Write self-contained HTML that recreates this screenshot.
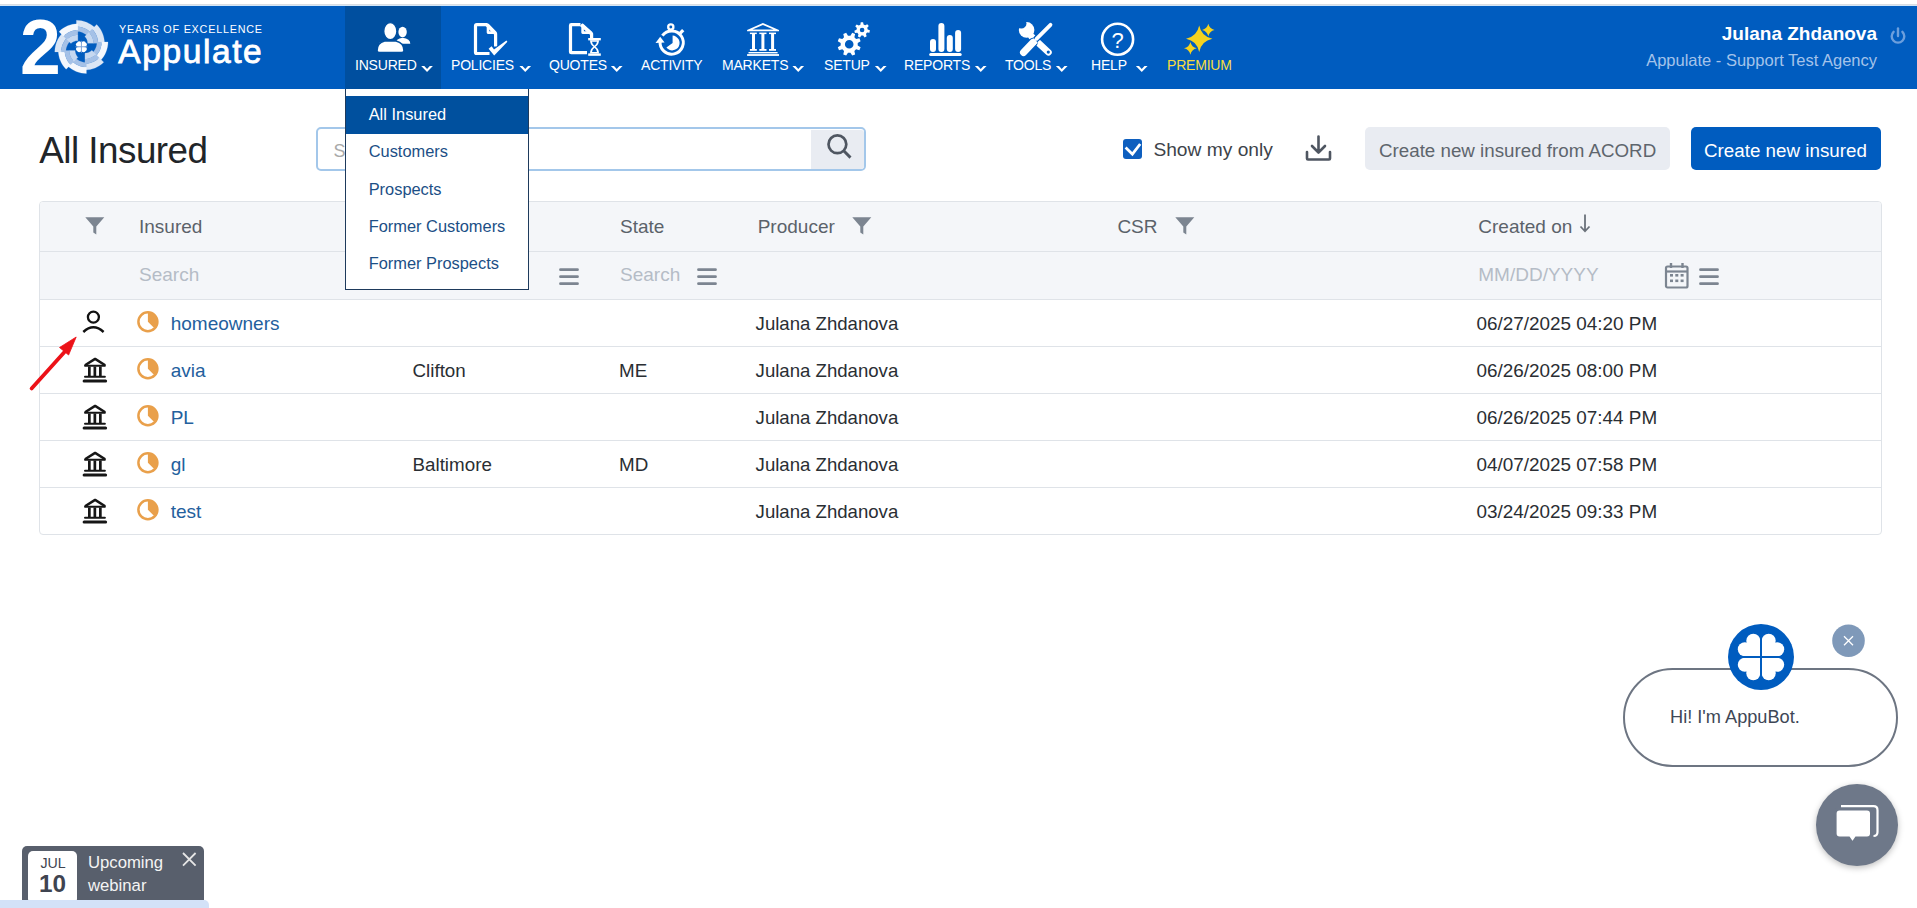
<!DOCTYPE html>
<html><head><meta charset="utf-8"><style>
*{box-sizing:border-box;margin:0;padding:0}
html,body{width:1917px;height:908px;overflow:hidden;background:#fff;font-family:"Liberation Sans",sans-serif;position:relative}
.t{position:absolute;white-space:nowrap}
.r{position:absolute}
svg{position:absolute;overflow:visible}
</style></head>
<body>
<div class="r" style="left:0px;top:0px;width:1917px;height:4px;background:#ffffff;"></div>
<div class="r" style="left:0px;top:4px;width:1917px;height:1px;background:#d9dde2;"></div>
<div class="r" style="left:0px;top:5px;width:1917px;height:1px;background:#d4e6f7;"></div>
<div class="r" style="left:0px;top:6px;width:1917px;height:83px;background:#005cbf;"></div>
<div class="r" style="left:345px;top:6px;width:96px;height:83px;background:#004f9f;"></div>
<svg class="abs" style="left:0;top:0" width="1917" height="90" viewBox="0 0 1917 90">
<g fill="#fff" stroke="none">
<!-- insured -->
<ellipse cx="402.6" cy="32" rx="4.2" ry="5.3"/>
<path d="M395.5,43.8 Q395.5,38.6 402.6,37.8 Q410.3,38.6 410.3,43.8 Z"/>
<path d="M377,50.5 Q377,43 384.5,41 L396,41 Q404,43 404,50.5 Q404,52.5 401.5,52.5 L379.5,52.5 Q377,52.5 377,50.5 Z" stroke="#004f9f" stroke-width="1.6"/>
<ellipse cx="390.3" cy="31.2" rx="6.6" ry="8.6" stroke="#004f9f" stroke-width="1.4"/>
<!-- reports -->
<rect x="930" y="39" width="6" height="13" rx="3"/>
<rect x="938.4" y="23" width="6" height="29" rx="3"/>
<rect x="946.8" y="35" width="6" height="17" rx="3"/>
<rect x="955.1" y="30" width="6" height="22" rx="3"/>
<rect x="929.2" y="53" width="32.5" height="3" rx="1.5"/>
<!-- setup -->
<path fill-rule="evenodd" d="M857.71,45.41 L860.61,47.22 L859.40,50.13 L856.08,49.36 L854.36,51.08 L855.13,54.40 L852.22,55.61 L850.41,52.71 L847.99,52.71 L846.18,55.61 L843.27,54.40 L844.04,51.08 L842.32,49.36 L839.00,50.13 L837.79,47.22 L840.69,45.41 L840.69,42.99 L837.79,41.18 L839.00,38.27 L842.32,39.04 L844.04,37.32 L843.27,34.00 L846.18,32.79 L847.99,35.69 L850.41,35.69 L852.22,32.79 L855.13,34.00 L854.36,37.32 L856.08,39.04 L859.40,38.27 L860.61,41.18 L857.71,42.99 Z M844.90,44.20 a4.30,4.30 0 1,0 8.60,0 a4.30,4.30 0 1,0 -8.60,0 Z"/>
<path fill-rule="evenodd" d="M867.68,29.51 L869.89,30.37 L869.42,32.69 L867.05,32.62 L865.96,34.06 L866.67,36.32 L864.56,37.40 L863.14,35.50 L861.33,35.55 L860.01,37.51 L857.85,36.54 L858.44,34.24 L857.29,32.86 L854.92,33.05 L854.34,30.75 L856.50,29.78 L856.86,28.02 L855.24,26.29 L856.67,24.40 L858.78,25.49 L860.38,24.67 L860.73,22.32 L863.10,22.26 L863.55,24.59 L865.20,25.33 L867.25,24.14 L868.77,25.96 L867.24,27.77 Z M859.80,30.00 a2.30,2.30 0 1,0 4.60,0 a2.30,2.30 0 1,0 -4.60,0 Z"/>
<!-- premium -->
<g fill="#f5d21e"><path d="M1199.20,25.60 Q1201.40,36.60 1212.40,38.80 Q1201.40,41.00 1199.20,52.00 Q1197.00,41.00 1186.00,38.80 Q1197.00,36.60 1199.20,25.60 Z"/><path d="M1208.30,23.80 Q1209.50,28.80 1214.50,30.00 Q1209.50,31.20 1208.30,36.20 Q1207.10,31.20 1202.10,30.00 Q1207.10,28.80 1208.30,23.80 Z"/><path d="M1190.40,41.90 Q1191.60,47.10 1196.80,48.30 Q1191.60,49.50 1190.40,54.70 Q1189.20,49.50 1184.00,48.30 Q1189.20,47.10 1190.40,41.90 Z"/></g>
<!-- markets -->
<path fill-rule="evenodd" d="M747.1,31.2 L747.1,30 L762.9,22.9 L779,30 L779,31.2 Z M752.5,29.4 L762.9,25 L773.5,29.4 Z"/>
<rect x="749.9" y="32.6" width="6.9" height="1.5"/><rect x="752" y="33.5" width="3" height="16"/><rect x="749.9" y="49" width="6.9" height="1.8"/>
<rect x="759.3" y="32.6" width="7.2" height="1.5"/><rect x="761.4" y="33.5" width="3" height="16"/><rect x="759.3" y="49" width="7.2" height="1.8"/>
<rect x="769" y="32.6" width="7" height="1.5"/><rect x="771.1" y="33.5" width="3" height="16"/><rect x="769" y="49" width="7" height="1.8"/>
<rect x="748.5" y="52" width="29.1" height="1.4"/>
<rect x="747.1" y="54.1" width="31.9" height="1.8"/>
</g>
<g fill="none" stroke="#fff" stroke-linecap="butt" stroke-linejoin="round">
<!-- policies doc -->
<path d="M487.5,24.7 L476.8,24.7 Q475.5,24.7 475.5,26 L475.5,52.2 Q475.5,53.5 476.8,53.5 L489.5,53.5" stroke-width="3.2"/>
<path d="M486.5,24.7 L495.6,33.8 L495.6,46.5" stroke-width="3.2"/>
<path d="M488,25 L488,32.6 L495.5,32.6 Z" stroke-width="2.6"/>
<path d="M488.6,48.8 L491.6,46.2 L494,49.4 L506.4,40.6 L507.4,41.8 L494.2,55.4 Z" fill="#fff" stroke="#005cbf" stroke-width="1.6" stroke-linejoin="miter"/>
<path d="M488.6,48.8 L491.6,46.2 L494,49.4 L506.4,40.6 L507.4,41.8 L494.2,55.4 Z" fill="#fff" stroke="none"/>
<!-- quotes doc -->
<path d="M580.5,24.7 L571.3,24.7 Q570.5,24.7 570.5,25.5 L570.5,51.9 Q570.5,52.7 571.3,52.7 L587,52.7" stroke-width="3.2"/>
<path d="M581,24.7 L591.6,34 L591.6,38" stroke-width="3.2"/>
<path d="M582.6,25 L582.6,32.6 L591.2,32.6 Z" stroke-width="2.6"/>
<!-- help -->
<circle cx="1117.6" cy="39.3" r="15.5" stroke-width="2.6"/>
<!-- activity -->
<path d="M662.4,35.6 A11.6,11.6 0 1,1 660.2,41" stroke-width="3"/>
<circle cx="670.8" cy="27" r="2.6" stroke-width="2.3"/>
<path d="M678.8,34.6 L683.2,30.2" stroke-width="3.3"/>
</g>
<g fill="#fff">
<!-- quotes hourglass -->
<rect x="588.2" y="38" width="12.6" height="2.4"/>
<rect x="588.2" y="53.4" width="12.6" height="2.4"/>
<path d="M590,40.2 L599,40.2 Q599,44.5 595.5,46.8 Q599,49 599,53.6 L590,53.6 Q590,49 593.5,46.8 Q590,44.5 590,40.2 Z M592,41.8 Q592.3,44.4 594.5,45.8 Q596.7,44.4 597,41.8 Z M592,52 L597,52 Q596.7,49.2 594.5,47.8 Q592.3,49.2 592,52 Z" fill-rule="evenodd"/>
<!-- activity pie + arrow -->
<path d="M672.6,35.6 A7.4,7.4 0 1,1 666.4,47.6 L672.6,43 Z"/>
<path d="M655.5,43 L660.2,36.8 L664.6,42.5 Z"/>
<!-- help ? -->
<text x="1117.6" y="47.5" font-family="Liberation Sans" font-size="22" text-anchor="middle">?</text>
</g>
<g>
<path d="M1031.5,36.5 L1048.5,52.3" stroke="#fff" stroke-width="6.5" stroke-linecap="round"/>
<circle cx="1026.6" cy="29.9" r="7.8" fill="#fff"/>
<circle cx="1021.3" cy="23.4" r="5.2" fill="#005cbf"/>
<circle cx="1048.3" cy="52.1" r="1.6" fill="#005cbf"/>
<path d="M1050.5,24.8 L1036.5,38.8" stroke="#005cbf" stroke-width="6.5" stroke-linecap="round"/>
<path d="M1033,42.5 L1023.5,52.5" stroke="#005cbf" stroke-width="9.5" stroke-linecap="round"/>
<path d="M1050.5,24.8 L1036.5,38.8" stroke="#fff" stroke-width="3.8" stroke-linecap="round"/>
<path d="M1032.2,39.5 L1036.5,43.8" stroke="#fff" stroke-width="3.2"/>
<path d="M1033,42.5 L1023.5,52.5" stroke="#fff" stroke-width="7" stroke-linecap="round"/>
</g>
<!-- carets -->
<g fill="#fff"><path d="M421.20,66.10 L424.30,66.10 L427.05,68.90 L429.80,66.10 L432.90,66.10 L427.05,72.10 Z"/><path d="M519.40,66.10 L522.50,66.10 L525.25,68.90 L528.00,66.10 L531.10,66.10 L525.25,72.10 Z"/><path d="M610.90,66.10 L614.00,66.10 L616.75,68.90 L619.50,66.10 L622.60,66.10 L616.75,72.10 Z"/><path d="M792.40,66.10 L795.50,66.10 L798.25,68.90 L801.00,66.10 L804.10,66.10 L798.25,72.10 Z"/><path d="M874.90,66.10 L878.00,66.10 L880.75,68.90 L883.50,66.10 L886.60,66.10 L880.75,72.10 Z"/><path d="M974.90,66.10 L978.00,66.10 L980.75,68.90 L983.50,66.10 L986.60,66.10 L980.75,72.10 Z"/><path d="M1055.90,66.10 L1059.00,66.10 L1061.75,68.90 L1064.50,66.10 L1067.60,66.10 L1061.75,72.10 Z"/><path d="M1135.90,66.10 L1139.00,66.10 L1141.75,68.90 L1144.50,66.10 L1147.60,66.10 L1141.75,72.10 Z"/></g>
</svg><div class="t" style="left:19.80px;top:8.17px;font-size:78px;line-height:78px;color:#fff;font-weight:bold;transform:scaleX(0.94);transform-origin:left top">2</div>
<svg style="left:0;top:0" width="120" height="90" viewBox="0 0 120 90">
<path d="M76.40,20.30 L79.01,20.43 L81.59,20.81 L84.12,21.45 L86.58,22.32 L88.94,23.44 L91.18,24.78 L93.27,26.34 L95.21,28.09 L90.68,32.62 L89.21,31.29 L87.62,30.10 L85.92,29.09 L84.13,28.24 L82.26,27.57 L80.34,27.09 L78.38,26.80 L76.40,26.70 Z" fill="#dbe6f5" stroke="#dbe6f5" stroke-width="0.2"/>
<path d="M76.40,26.70 L78.38,26.80 L80.34,27.09 L82.26,27.57 L84.13,28.24 L85.92,29.09 L87.62,30.10 L89.21,31.29 L90.68,32.62 L87.43,35.87 L86.30,34.84 L85.07,33.93 L83.75,33.14 L82.37,32.49 L80.93,31.97 L79.44,31.60 L77.93,31.38 L76.40,31.30 Z" fill="#a5c1e7" stroke="#a5c1e7" stroke-width="0.2"/>
<path d="M96.67,24.56 L98.43,26.49 L99.98,28.59 L101.32,30.83 L102.44,33.19 L103.32,35.64 L103.95,38.18 L104.34,40.76 L104.46,43.36 L98.06,43.36 L97.97,41.38 L97.68,39.42 L97.19,37.50 L96.53,35.63 L95.68,33.84 L94.66,32.14 L93.48,30.55 L92.15,29.08 Z" fill="#dbe6f5" stroke="#dbe6f5" stroke-width="0.2"/>
<path d="M92.15,29.08 L93.48,30.55 L94.66,32.14 L95.68,33.84 L96.53,35.63 L97.19,37.50 L97.68,39.42 L97.97,41.38 L98.06,43.36 L93.46,43.36 L93.39,41.84 L93.16,40.32 L92.79,38.84 L92.28,37.39 L91.62,36.01 L90.84,34.70 L89.92,33.47 L88.90,32.33 Z" fill="#a5c1e7" stroke="#a5c1e7" stroke-width="0.2"/>
<path d="M88.90,32.33 L89.92,33.47 L90.84,34.70 L91.62,36.01 L92.28,37.39 L92.79,38.84 L93.16,40.32 L93.39,41.84 L93.46,43.36 L87.66,43.36 L87.62,42.40 L87.48,41.45 L87.24,40.52 L86.92,39.61 L86.51,38.74 L86.01,37.92 L85.44,37.15 L84.79,36.43 Z" fill="#c6d8f0" stroke="#c6d8f0" stroke-width="0.2"/>
<path d="M108.00,41.90 L107.87,44.51 L107.49,47.09 L106.85,49.62 L105.98,52.08 L104.86,54.44 L103.52,56.68 L101.96,58.77 L100.21,60.71 L95.68,56.18 L97.01,54.71 L98.20,53.12 L99.21,51.42 L100.06,49.63 L100.73,47.76 L101.21,45.84 L101.50,43.88 L101.60,41.90 Z" fill="#f5f8fd" stroke="#f5f8fd" stroke-width="0.2"/>
<path d="M101.60,41.90 L101.50,43.88 L101.21,45.84 L100.73,47.76 L100.06,49.63 L99.21,51.42 L98.20,53.12 L97.01,54.71 L95.68,56.18 L92.43,52.93 L93.46,51.80 L94.37,50.57 L95.16,49.25 L95.81,47.87 L96.33,46.43 L96.70,44.94 L96.92,43.43 L97.00,41.90 Z" fill="#a5c1e7" stroke="#a5c1e7" stroke-width="0.2"/>
<path d="M103.74,62.17 L101.81,63.93 L99.71,65.48 L97.47,66.82 L95.11,67.94 L92.66,68.82 L90.12,69.45 L87.54,69.84 L84.94,69.96 L84.94,63.56 L86.92,63.47 L88.88,63.18 L90.80,62.69 L92.67,62.03 L94.46,61.18 L96.16,60.16 L97.75,58.98 L99.22,57.65 Z" fill="#dbe6f5" stroke="#dbe6f5" stroke-width="0.2"/>
<path d="M99.22,57.65 L97.75,58.98 L96.16,60.16 L94.46,61.18 L92.67,62.03 L90.80,62.69 L88.88,63.18 L86.92,63.47 L84.94,63.56 L84.94,58.96 L86.46,58.89 L87.98,58.66 L89.46,58.29 L90.91,57.78 L92.29,57.12 L93.60,56.34 L94.83,55.42 L95.97,54.40 Z" fill="#a5c1e7" stroke="#a5c1e7" stroke-width="0.2"/>
<path d="M95.97,54.40 L94.83,55.42 L93.60,56.34 L92.29,57.12 L90.91,57.78 L89.46,58.29 L87.98,58.66 L86.46,58.89 L84.94,58.96 L84.94,53.16 L85.90,53.12 L86.85,52.98 L87.78,52.74 L88.69,52.42 L89.56,52.01 L90.38,51.51 L91.15,50.94 L91.87,50.29 Z" fill="#c6d8f0" stroke="#c6d8f0" stroke-width="0.2"/>
<path d="M86.40,73.50 L83.79,73.37 L81.21,72.99 L78.68,72.35 L76.22,71.48 L73.86,70.36 L71.62,69.02 L69.53,67.46 L67.59,65.71 L72.12,61.18 L73.59,62.51 L75.18,63.70 L76.88,64.71 L78.67,65.56 L80.54,66.23 L82.46,66.71 L84.42,67.00 L86.40,67.10 Z" fill="#f5f8fd" stroke="#f5f8fd" stroke-width="0.2"/>
<path d="M86.40,67.10 L84.42,67.00 L82.46,66.71 L80.54,66.23 L78.67,65.56 L76.88,64.71 L75.18,63.70 L73.59,62.51 L72.12,61.18 L75.37,57.93 L76.50,58.96 L77.73,59.87 L79.05,60.66 L80.43,61.31 L81.87,61.83 L83.36,62.20 L84.87,62.42 L86.40,62.50 Z" fill="#a5c1e7" stroke="#a5c1e7" stroke-width="0.2"/>
<path d="M66.13,69.24 L64.37,67.31 L62.82,65.21 L61.48,62.97 L60.36,60.61 L59.48,58.16 L58.85,55.62 L58.46,53.04 L58.34,50.44 L64.74,50.44 L64.83,52.42 L65.12,54.38 L65.61,56.30 L66.27,58.17 L67.12,59.96 L68.14,61.66 L69.32,63.25 L70.65,64.72 Z" fill="#f5f8fd" stroke="#f5f8fd" stroke-width="0.2"/>
<path d="M70.65,64.72 L69.32,63.25 L68.14,61.66 L67.12,59.96 L66.27,58.17 L65.61,56.30 L65.12,54.38 L64.83,52.42 L64.74,50.44 L69.34,50.44 L69.41,51.96 L69.64,53.48 L70.01,54.96 L70.52,56.41 L71.18,57.79 L71.96,59.10 L72.88,60.33 L73.90,61.47 Z" fill="#a5c1e7" stroke="#a5c1e7" stroke-width="0.2"/>
<path d="M73.90,61.47 L72.88,60.33 L71.96,59.10 L71.18,57.79 L70.52,56.41 L70.01,54.96 L69.64,53.48 L69.41,51.96 L69.34,50.44 L75.14,50.44 L75.18,51.40 L75.32,52.35 L75.56,53.28 L75.88,54.19 L76.29,55.06 L76.79,55.88 L77.36,56.65 L78.01,57.37 Z" fill="#c6d8f0" stroke="#c6d8f0" stroke-width="0.2"/>
<path d="M54.80,51.90 L54.93,49.29 L55.31,46.71 L55.95,44.18 L56.82,41.72 L57.94,39.36 L59.28,37.12 L60.84,35.03 L62.59,33.09 L67.12,37.62 L65.79,39.09 L64.60,40.68 L63.59,42.38 L62.74,44.17 L62.07,46.04 L61.59,47.96 L61.30,49.92 L61.20,51.90 Z" fill="#dbe6f5" stroke="#dbe6f5" stroke-width="0.2"/>
<path d="M61.20,51.90 L61.30,49.92 L61.59,47.96 L62.07,46.04 L62.74,44.17 L63.59,42.38 L64.60,40.68 L65.79,39.09 L67.12,37.62 L70.37,40.87 L69.34,42.00 L68.43,43.23 L67.64,44.55 L66.99,45.93 L66.47,47.37 L66.10,48.86 L65.88,50.37 L65.80,51.90 Z" fill="#a5c1e7" stroke="#a5c1e7" stroke-width="0.2"/>
<path d="M59.06,31.63 L60.99,29.87 L63.09,28.32 L65.33,26.98 L67.69,25.86 L70.14,24.98 L72.68,24.35 L75.26,23.96 L77.86,23.84 L77.86,30.24 L75.88,30.33 L73.92,30.62 L72.00,31.11 L70.13,31.77 L68.34,32.62 L66.64,33.64 L65.05,34.82 L63.58,36.15 Z" fill="#f5f8fd" stroke="#f5f8fd" stroke-width="0.2"/>
<path d="M63.58,36.15 L65.05,34.82 L66.64,33.64 L68.34,32.62 L70.13,31.77 L72.00,31.11 L73.92,30.62 L75.88,30.33 L77.86,30.24 L77.86,34.84 L76.34,34.91 L74.82,35.14 L73.34,35.51 L71.89,36.02 L70.51,36.68 L69.20,37.46 L67.97,38.38 L66.83,39.40 Z" fill="#a5c1e7" stroke="#a5c1e7" stroke-width="0.2"/>
<path d="M66.83,39.40 L67.97,38.38 L69.20,37.46 L70.51,36.68 L71.89,36.02 L73.34,35.51 L74.82,35.14 L76.34,34.91 L77.86,34.84 L77.86,40.64 L76.90,40.68 L75.95,40.82 L75.02,41.06 L74.11,41.38 L73.24,41.79 L72.42,42.29 L71.65,42.86 L70.93,43.51 Z" fill="#c6d8f0" stroke="#c6d8f0" stroke-width="0.2"/>
<circle cx="78.00" cy="44.60" r="2.1" fill="#fff"/>
<circle cx="79.20" cy="43.40" r="2.1" fill="#fff"/>
<rect x="78.40" y="43.80" width="3" height="3" fill="#fff"/>
<circle cx="78.00" cy="49.00" r="2.1" fill="#fff"/>
<circle cx="79.20" cy="50.20" r="2.1" fill="#fff"/>
<rect x="78.40" y="46.80" width="3" height="3" fill="#fff"/>
<circle cx="84.80" cy="44.60" r="2.1" fill="#fff"/>
<circle cx="83.60" cy="43.40" r="2.1" fill="#fff"/>
<rect x="81.40" y="43.80" width="3" height="3" fill="#fff"/>
<circle cx="84.80" cy="49.00" r="2.1" fill="#fff"/>
<circle cx="83.60" cy="50.20" r="2.1" fill="#fff"/>
<rect x="81.40" y="46.80" width="3" height="3" fill="#fff"/>
<path d="M81.4,40.8 V52.8 M75.4,46.8 H87.4" stroke="#7aa3d8" stroke-width="0.9"/>
</svg>
<div class="t" style="left:119.00px;top:23.08px;font-size:11.6px;line-height:11.6px;color:#fff;font-weight:normal;letter-spacing:0.85px;transform:scaleX(0.93);transform-origin:left top">YEARS OF EXCELLENCE</div>
<div class="t" style="left:118.30px;top:34.64px;font-size:33.5px;line-height:33.5px;color:#fff;font-weight:normal;letter-spacing:1.6px;-webkit-text-stroke:0.8px #fff">Appulate</div>
<div class="t" style="left:355.00px;top:58.15px;font-size:14px;line-height:14px;color:#fff;font-weight:normal;letter-spacing:-0.2px">INSURED</div>
<div class="t" style="left:451.00px;top:58.15px;font-size:14px;line-height:14px;color:#fff;font-weight:normal;letter-spacing:-0.2px">POLICIES</div>
<div class="t" style="left:549.00px;top:58.15px;font-size:14px;line-height:14px;color:#fff;font-weight:normal;letter-spacing:-0.2px">QUOTES</div>
<div class="t" style="left:641.00px;top:58.15px;font-size:14px;line-height:14px;color:#fff;font-weight:normal;letter-spacing:-0.2px">ACTIVITY</div>
<div class="t" style="left:722.00px;top:58.15px;font-size:14px;line-height:14px;color:#fff;font-weight:normal;letter-spacing:-0.2px">MARKETS</div>
<div class="t" style="left:824.00px;top:58.15px;font-size:14px;line-height:14px;color:#fff;font-weight:normal;letter-spacing:-0.2px">SETUP</div>
<div class="t" style="left:904.00px;top:58.15px;font-size:14px;line-height:14px;color:#fff;font-weight:normal;letter-spacing:-0.2px">REPORTS</div>
<div class="t" style="left:1005.00px;top:58.15px;font-size:14px;line-height:14px;color:#fff;font-weight:normal;letter-spacing:-0.2px">TOOLS</div>
<div class="t" style="left:1091.00px;top:58.15px;font-size:14px;line-height:14px;color:#fff;font-weight:normal;letter-spacing:-0.2px">HELP</div>
<div class="t" style="left:1167.00px;top:58.15px;font-size:14px;line-height:14px;color:#f7dc3d;font-weight:normal;letter-spacing:-0.2px">PREMIUM</div>
<div class="t" style="right:40.00px;top:24.42px;font-size:19px;line-height:19px;color:#fff;font-weight:bold;">Julana Zhdanova</div>
<div class="t" style="right:40.00px;top:51.53px;font-size:16.5px;line-height:16.5px;color:#a4c3ea;font-weight:normal;">Appulate - Support Test Agency</div>
<svg style="left:1888px;top:25px" width="20" height="22" viewBox="0 0 20 22"><path d="M5.6,6.8 A6.3,6.3 0 1,0 14.4,6.8" fill="none" stroke="#6c9fdd" stroke-width="2.4" stroke-linecap="round"/><path d="M10,3.5 V11" stroke="#6c9fdd" stroke-width="2.4" stroke-linecap="round"/></svg>
<div class="t" style="left:39.20px;top:133.35px;font-size:36.8px;line-height:36.8px;color:#212529;font-weight:normal;letter-spacing:-0.5px">All Insured</div>
<div class="r" style="left:316px;top:127px;width:550px;height:44px;background:#fff;border:2.5px solid #a3c7ea;border-radius:5px"></div>
<div class="r" style="left:811px;top:129.5px;width:52.5px;height:39.0px;background:#e9ecf2;border-radius:0 3px 3px 0"></div>
<div class="t" style="left:333.50px;top:141.76px;font-size:18px;line-height:18px;color:#a9a9a9;font-weight:normal;">Search...</div>
<svg style="left:820px;top:134px" width="36" height="30" viewBox="0 0 36 30"><circle cx="17.4" cy="10.3" r="8.9" fill="none" stroke="#4f5661" stroke-width="2.7"/><path d="M23.7,16.8 L30.5,23.6" stroke="#4f5661" stroke-width="2.9"/></svg>
<div class="r" style="left:1122.6px;top:139.1px;width:19.600000000000136px;height:19.599999999999994px;background:#0e5fbf;border-radius:3px"></div>
<svg style="left:1122px;top:139px" width="21" height="20" viewBox="0 0 21 20"><path d="M3.6,8.6 L10.4,15.2 L18.2,5" fill="none" stroke="#fff" stroke-width="2.8"/></svg>
<div class="t" style="left:1153.40px;top:139.95px;font-size:19.2px;line-height:19.2px;color:#3d434a;font-weight:normal;">Show my only</div>
<svg style="left:1304px;top:135px" width="30" height="28" viewBox="0 0 30 28"><path d="M14.5,1.5 V17 M8,11 L14.5,17.5 L21,11" fill="none" stroke="#4f5661" stroke-width="2.6" stroke-linecap="round" stroke-linejoin="round"/><path d="M3,17 V23.5 Q3,24.5 4,24.5 H25 Q26,24.5 26,23.5 V17" fill="none" stroke="#4f5661" stroke-width="2.6" stroke-linecap="round" stroke-linejoin="round"/></svg>
<div class="r" style="left:1365px;top:127.4px;width:304.5px;height:43.0px;background:#e9ecf2;border-radius:5px"></div>
<div class="t" style="left:1379.00px;top:142.13px;font-size:18.75px;line-height:18.75px;color:#5e656d;font-weight:normal;">Create new insured from ACORD</div>
<div class="r" style="left:1691px;top:127.4px;width:190px;height:43.0px;background:#005cbf;border-radius:5px"></div>
<div class="t" style="left:1704.00px;top:142.09px;font-size:18.8px;line-height:18.8px;color:#fff;font-weight:normal;">Create new insured</div>
<div class="r" style="left:39px;top:201px;width:1843px;height:334px;background:#fff;border:1px solid #dfe3e8;border-radius:4px;overflow:hidden"></div>
<div class="r" style="left:40px;top:202px;width:1841px;height:97px;background:#f4f6f9;border-radius:3px 3px 0 0"></div>
<div class="r" style="left:40px;top:251px;width:1841px;height:1px;background:#dfe3e8;"></div>
<div class="r" style="left:40px;top:299px;width:1841px;height:1px;background:#dfe3e8;"></div>
<div class="r" style="left:40px;top:346px;width:1841px;height:1px;background:#dfe3e8;"></div>
<div class="r" style="left:40px;top:393px;width:1841px;height:1px;background:#dfe3e8;"></div>
<div class="r" style="left:40px;top:440px;width:1841px;height:1px;background:#dfe3e8;"></div>
<div class="r" style="left:40px;top:487px;width:1841px;height:1px;background:#dfe3e8;"></div>
<div class="t" style="left:139.00px;top:216.72px;font-size:19px;line-height:19px;color:#5b626a;font-weight:normal;">Insured</div>
<div class="t" style="left:620.00px;top:216.72px;font-size:19px;line-height:19px;color:#5b626a;font-weight:normal;">State</div>
<div class="t" style="left:757.70px;top:216.72px;font-size:19px;line-height:19px;color:#5b626a;font-weight:normal;">Producer</div>
<div class="t" style="left:1117.40px;top:216.72px;font-size:19px;line-height:19px;color:#5b626a;font-weight:normal;">CSR</div>
<div class="t" style="left:1478.30px;top:216.72px;font-size:19px;line-height:19px;color:#5b626a;font-weight:normal;">Created on</div>
<svg style="left:85.1px;top:216.8px" width="20" height="18" viewBox="0 0 20 18"><path d="M0.3,0.3 H19.3 L11.3,9.5 V17.5 L8.3,15.5 V9.5 Z" fill="#7c8591"/></svg>
<svg style="left:852.1px;top:217.2px" width="20" height="18" viewBox="0 0 20 18"><path d="M0.3,0.3 H19.3 L11.3,9.5 V17.5 L8.3,15.5 V9.5 Z" fill="#7c8591"/></svg>
<svg style="left:1174.8px;top:217px" width="20" height="18" viewBox="0 0 20 18"><path d="M0.3,0.3 H19.3 L11.3,9.5 V17.5 L8.3,15.5 V9.5 Z" fill="#7c8591"/></svg>
<svg style="left:1578px;top:213px" width="14" height="20" viewBox="0 0 14 20"><path d="M7,1.5 V18 M2.5,13.5 L7,18.3 L11.5,13.5" fill="none" stroke="#6b727b" stroke-width="1.8"/></svg>
<div class="t" style="left:139.00px;top:264.72px;font-size:19px;line-height:19px;color:#b5bcc6;font-weight:normal;">Search</div>
<div class="t" style="left:620.00px;top:264.72px;font-size:19px;line-height:19px;color:#b5bcc6;font-weight:normal;">Search</div>
<div class="t" style="left:1478.30px;top:265.22px;font-size:19px;line-height:19px;color:#b5bcc6;font-weight:normal;">MM/DD/YYYY</div>
<svg style="left:558.5px;top:267px" width="20" height="20" viewBox="0 0 20 20"><path d="M1.5,2.7 H18.5 M1.5,9.7 H18.5 M1.5,16.7 H18.5" stroke="#7c8591" stroke-width="2.8" stroke-linecap="round"/></svg>
<svg style="left:696.7px;top:267px" width="20" height="20" viewBox="0 0 20 20"><path d="M1.5,2.7 H18.5 M1.5,9.7 H18.5 M1.5,16.7 H18.5" stroke="#7c8591" stroke-width="2.8" stroke-linecap="round"/></svg>
<svg style="left:1698.5px;top:267px" width="20" height="20" viewBox="0 0 20 20"><path d="M1.5,2.7 H18.5 M1.5,9.7 H18.5 M1.5,16.7 H18.5" stroke="#7c8591" stroke-width="2.8" stroke-linecap="round"/></svg>
<svg style="left:1664px;top:262px" width="26" height="27" viewBox="0 0 26 27"><rect x="2" y="4.5" width="21.5" height="21" rx="1.5" fill="none" stroke="#7c8591" stroke-width="2.2"/><path d="M2,9.5 H23.5" stroke="#7c8591" stroke-width="2.2"/><path d="M7,1 V6 M18.5,1 V6" stroke="#7c8591" stroke-width="2.4"/><g fill="#7c8591"><rect x="6" y="12" width="3" height="2.6"/><rect x="11.3" y="12" width="3" height="2.6"/><rect x="16.6" y="12" width="3" height="2.6"/><rect x="6" y="17.5" width="3" height="2.6"/><rect x="11.3" y="17.5" width="3" height="2.6"/><rect x="16.6" y="17.5" width="3" height="2.6"/></g></svg>
<svg style="left:80px;top:299px" width="28" height="40" viewBox="0 0 28 40"><circle cx="13.4" cy="18.1" r="5.5" fill="none" stroke="#111" stroke-width="2.3"/><path d="M3.3,33 Q13.4,23.6 23.6,33" fill="none" stroke="#111" stroke-width="2.4"/></svg>
<svg style="left:135px;top:299px" width="26" height="40" viewBox="0 0 26 40"><circle cx="12.9" cy="22.75" r="9.5" fill="none" stroke="#e9a04b" stroke-width="2.5"/><path d="M12.9,13.6 A9.2,9.2 0 0,1 19.4,29.25 L12.9,22.75 Z" fill="#e9a04b"/></svg>
<div class="t" style="left:170.70px;top:314.42px;font-size:19px;line-height:19px;color:#23609d;font-weight:normal;">homeowners</div>
<div class="t" style="left:755.60px;top:314.76px;font-size:18.6px;line-height:18.6px;color:#2a2e33;font-weight:normal;">Julana Zhdanova</div>
<div class="t" style="left:1476.50px;top:314.50px;font-size:18.9px;line-height:18.9px;color:#2a2e33;font-weight:normal;">06/27/2025 04:20 PM</div>
<svg style="left:80px;top:346px" width="30" height="40" viewBox="0 0 30 40"><g fill="#161616"><path d="M5,19.3 L15.1,12.9 L25.2,19.3" fill="none" stroke="#161616" stroke-width="2.5" stroke-linejoin="round"/><rect x="4" y="18.7" width="21.9" height="2.1" rx="1"/><rect x="8" y="20.5" width="2.7" height="9.5"/><rect x="13.5" y="20.5" width="2.7" height="9.5"/><rect x="19" y="20.5" width="2.7" height="9.5"/><rect x="4" y="29.7" width="21.9" height="2" rx="1"/><rect x="2.6" y="33.6" width="24.5" height="3" rx="1.5"/></g></svg>
<svg style="left:135px;top:346px" width="26" height="40" viewBox="0 0 26 40"><circle cx="12.9" cy="22.75" r="9.5" fill="none" stroke="#e9a04b" stroke-width="2.5"/><path d="M12.9,13.6 A9.2,9.2 0 0,1 19.4,29.25 L12.9,22.75 Z" fill="#e9a04b"/></svg>
<div class="t" style="left:170.70px;top:361.42px;font-size:19px;line-height:19px;color:#23609d;font-weight:normal;">avia</div>
<div class="t" style="left:412.50px;top:361.59px;font-size:18.8px;line-height:18.8px;color:#2a2e33;font-weight:normal;">Clifton</div>
<div class="t" style="left:619.00px;top:361.59px;font-size:18.8px;line-height:18.8px;color:#2a2e33;font-weight:normal;">ME</div>
<div class="t" style="left:755.60px;top:361.76px;font-size:18.6px;line-height:18.6px;color:#2a2e33;font-weight:normal;">Julana Zhdanova</div>
<div class="t" style="left:1476.50px;top:361.50px;font-size:18.9px;line-height:18.9px;color:#2a2e33;font-weight:normal;">06/26/2025 08:00 PM</div>
<svg style="left:80px;top:393px" width="30" height="40" viewBox="0 0 30 40"><g fill="#161616"><path d="M5,19.3 L15.1,12.9 L25.2,19.3" fill="none" stroke="#161616" stroke-width="2.5" stroke-linejoin="round"/><rect x="4" y="18.7" width="21.9" height="2.1" rx="1"/><rect x="8" y="20.5" width="2.7" height="9.5"/><rect x="13.5" y="20.5" width="2.7" height="9.5"/><rect x="19" y="20.5" width="2.7" height="9.5"/><rect x="4" y="29.7" width="21.9" height="2" rx="1"/><rect x="2.6" y="33.6" width="24.5" height="3" rx="1.5"/></g></svg>
<svg style="left:135px;top:393px" width="26" height="40" viewBox="0 0 26 40"><circle cx="12.9" cy="22.75" r="9.5" fill="none" stroke="#e9a04b" stroke-width="2.5"/><path d="M12.9,13.6 A9.2,9.2 0 0,1 19.4,29.25 L12.9,22.75 Z" fill="#e9a04b"/></svg>
<div class="t" style="left:170.70px;top:408.42px;font-size:19px;line-height:19px;color:#23609d;font-weight:normal;">PL</div>
<div class="t" style="left:755.60px;top:408.76px;font-size:18.6px;line-height:18.6px;color:#2a2e33;font-weight:normal;">Julana Zhdanova</div>
<div class="t" style="left:1476.50px;top:408.50px;font-size:18.9px;line-height:18.9px;color:#2a2e33;font-weight:normal;">06/26/2025 07:44 PM</div>
<svg style="left:80px;top:440px" width="30" height="40" viewBox="0 0 30 40"><g fill="#161616"><path d="M5,19.3 L15.1,12.9 L25.2,19.3" fill="none" stroke="#161616" stroke-width="2.5" stroke-linejoin="round"/><rect x="4" y="18.7" width="21.9" height="2.1" rx="1"/><rect x="8" y="20.5" width="2.7" height="9.5"/><rect x="13.5" y="20.5" width="2.7" height="9.5"/><rect x="19" y="20.5" width="2.7" height="9.5"/><rect x="4" y="29.7" width="21.9" height="2" rx="1"/><rect x="2.6" y="33.6" width="24.5" height="3" rx="1.5"/></g></svg>
<svg style="left:135px;top:440px" width="26" height="40" viewBox="0 0 26 40"><circle cx="12.9" cy="22.75" r="9.5" fill="none" stroke="#e9a04b" stroke-width="2.5"/><path d="M12.9,13.6 A9.2,9.2 0 0,1 19.4,29.25 L12.9,22.75 Z" fill="#e9a04b"/></svg>
<div class="t" style="left:170.70px;top:455.42px;font-size:19px;line-height:19px;color:#23609d;font-weight:normal;">gl</div>
<div class="t" style="left:412.50px;top:455.59px;font-size:18.8px;line-height:18.8px;color:#2a2e33;font-weight:normal;">Baltimore</div>
<div class="t" style="left:619.00px;top:455.59px;font-size:18.8px;line-height:18.8px;color:#2a2e33;font-weight:normal;">MD</div>
<div class="t" style="left:755.60px;top:455.76px;font-size:18.6px;line-height:18.6px;color:#2a2e33;font-weight:normal;">Julana Zhdanova</div>
<div class="t" style="left:1476.50px;top:455.50px;font-size:18.9px;line-height:18.9px;color:#2a2e33;font-weight:normal;">04/07/2025 07:58 PM</div>
<svg style="left:80px;top:487px" width="30" height="40" viewBox="0 0 30 40"><g fill="#161616"><path d="M5,19.3 L15.1,12.9 L25.2,19.3" fill="none" stroke="#161616" stroke-width="2.5" stroke-linejoin="round"/><rect x="4" y="18.7" width="21.9" height="2.1" rx="1"/><rect x="8" y="20.5" width="2.7" height="9.5"/><rect x="13.5" y="20.5" width="2.7" height="9.5"/><rect x="19" y="20.5" width="2.7" height="9.5"/><rect x="4" y="29.7" width="21.9" height="2" rx="1"/><rect x="2.6" y="33.6" width="24.5" height="3" rx="1.5"/></g></svg>
<svg style="left:135px;top:487px" width="26" height="40" viewBox="0 0 26 40"><circle cx="12.9" cy="22.75" r="9.5" fill="none" stroke="#e9a04b" stroke-width="2.5"/><path d="M12.9,13.6 A9.2,9.2 0 0,1 19.4,29.25 L12.9,22.75 Z" fill="#e9a04b"/></svg>
<div class="t" style="left:170.70px;top:502.42px;font-size:19px;line-height:19px;color:#23609d;font-weight:normal;">test</div>
<div class="t" style="left:755.60px;top:502.76px;font-size:18.6px;line-height:18.6px;color:#2a2e33;font-weight:normal;">Julana Zhdanova</div>
<div class="t" style="left:1476.50px;top:502.50px;font-size:18.9px;line-height:18.9px;color:#2a2e33;font-weight:normal;">03/24/2025 09:33 PM</div>
<svg style="left:0;top:300px" width="100" height="100" viewBox="0 300 100 100"><path d="M31.6,388.4 L64.5,352" stroke="#ec1218" stroke-width="3.8" stroke-linecap="round"/><path d="M76.2,337 L68.6,355 L59.5,347.5 Z" fill="#ec1218" stroke="#ec1218" stroke-width="0.8" stroke-linejoin="round"/></svg>
<div class="r" style="left:345px;top:89px;width:184px;height:201px;background:#fff;border:1px solid #1e3a5c;border-top:none"></div>
<div class="r" style="left:346px;top:96px;width:182px;height:37.599999999999994px;background:#00509e;"></div>
<div class="t" style="left:368.70px;top:106.22px;font-size:16.4px;line-height:16.4px;color:#fff;font-weight:normal;">All Insured</div>
<div class="t" style="left:368.70px;top:143.39px;font-size:16.4px;line-height:16.4px;color:#1c4f86;font-weight:normal;">Customers</div>
<div class="t" style="left:368.70px;top:180.56px;font-size:16.4px;line-height:16.4px;color:#1c4f86;font-weight:normal;">Prospects</div>
<div class="t" style="left:368.70px;top:217.73px;font-size:16.4px;line-height:16.4px;color:#1c4f86;font-weight:normal;">Former Customers</div>
<div class="t" style="left:368.70px;top:254.90px;font-size:16.4px;line-height:16.4px;color:#1c4f86;font-weight:normal;">Former Prospects</div>
<div class="r" style="left:1623px;top:668px;width:275px;height:99px;background:#fff;border:2px solid #6d7582;border-radius:50px"></div>
<div class="t" style="left:1670.00px;top:708.09px;font-size:18.2px;line-height:18.2px;color:#3e4756;font-weight:normal;">Hi! I&#39;m AppuBot.</div>
<svg style="left:1727px;top:623px" width="68" height="68" viewBox="0 0 68 68"><circle cx="34" cy="34" r="33" fill="#005cbf"/><g fill="#fff"><circle cx="26.3" cy="17.8" r="7"/><circle cx="17.8" cy="26.3" r="7"/><path d="M33.5,33.5 L33.5,17.8 L26.3,17.8 L21.0,21.0 L17.8,26.3 L17.8,33.5 Z"/><circle cx="26.3" cy="50.2" r="7"/><circle cx="17.8" cy="41.7" r="7"/><path d="M33.5,34.5 L33.5,50.2 L26.3,50.2 L21.0,47.0 L17.8,41.7 L17.8,34.5 Z"/><circle cx="41.7" cy="17.8" r="7"/><circle cx="50.2" cy="26.3" r="7"/><path d="M34.5,33.5 L34.5,17.8 L41.7,17.8 L47.0,21.0 L50.2,26.3 L50.2,33.5 Z"/><circle cx="41.7" cy="50.2" r="7"/><circle cx="50.2" cy="41.7" r="7"/><path d="M34.5,34.5 L34.5,50.2 L41.7,50.2 L47.0,47.0 L50.2,41.7 L50.2,34.5 Z"/></g><path d="M34,8 V60 M8,34 H60" stroke="#005cbf" stroke-width="2"/></svg>
<svg style="left:1831px;top:624px" width="35" height="35" viewBox="0 0 35 35"><circle cx="17.5" cy="16.7" r="16.3" fill="#7f99b9"/><path d="M13,12.2 L22,21.2 M22,12.2 L13,21.2" stroke="#fff" stroke-width="1.3"/></svg>
<div class="r" style="left:1816px;top:784px;width:82px;height:82px;border-radius:50%;background:#6e7889;box-shadow:0 2px 6px rgba(0,0,0,0.25)"></div>
<svg style="left:1816px;top:784px" width="82" height="82" viewBox="0 0 82 82"><path d="M25,22.2 H57.5 Q61.5,22.2 61.5,26.2 V48 Q61.5,52 57.5,52" fill="none" stroke="#fff" stroke-width="2.2"/><path d="M19.6,25.5 H51 Q55,25.5 55,29.5 V49.5 Q55,53.5 51,53.5 H40 L36.5,58.5 L33,53.5 H23.6 Q19.6,53.5 19.6,49.5 V29.5 Q19.6,25.5 23.6,25.5 Z" fill="#fff" stroke="#6e7889" stroke-width="2"/></svg>
<div class="r" style="left:22.4px;top:846.3px;width:181.4px;height:58.700000000000045px;background:#585f6c;border-radius:5px 5px 0 0"></div>
<div class="r" style="left:28.2px;top:851px;width:48.5px;height:53px;background:#fff;border-radius:5px"></div>
<div class="t" style="left:40.40px;top:856.48px;font-size:14.2px;line-height:14.2px;color:#3f4450;font-weight:normal;">JUL</div>
<div class="t" style="left:39.00px;top:872.23px;font-size:24.3px;line-height:24.3px;color:#3f4450;font-weight:bold;">10</div>
<div class="t" style="left:88.00px;top:855.36px;font-size:16.7px;line-height:16.7px;color:#f4f4f4;font-weight:normal;">Upcoming</div>
<div class="t" style="left:88.00px;top:877.86px;font-size:16.7px;line-height:16.7px;color:#f4f4f4;font-weight:normal;">webinar</div>
<svg style="left:181px;top:851px" width="17" height="17" viewBox="0 0 17 17"><path d="M2,2 L14.6,14.6 M14.6,2 L2,14.6" stroke="#e6e6e6" stroke-width="1.8"/></svg>
<div class="r" style="left:0px;top:899.8px;width:208.6px;height:8.200000000000045px;background:#d3e2f8;border-radius:0 5px 0 0"></div>
</body></html>
